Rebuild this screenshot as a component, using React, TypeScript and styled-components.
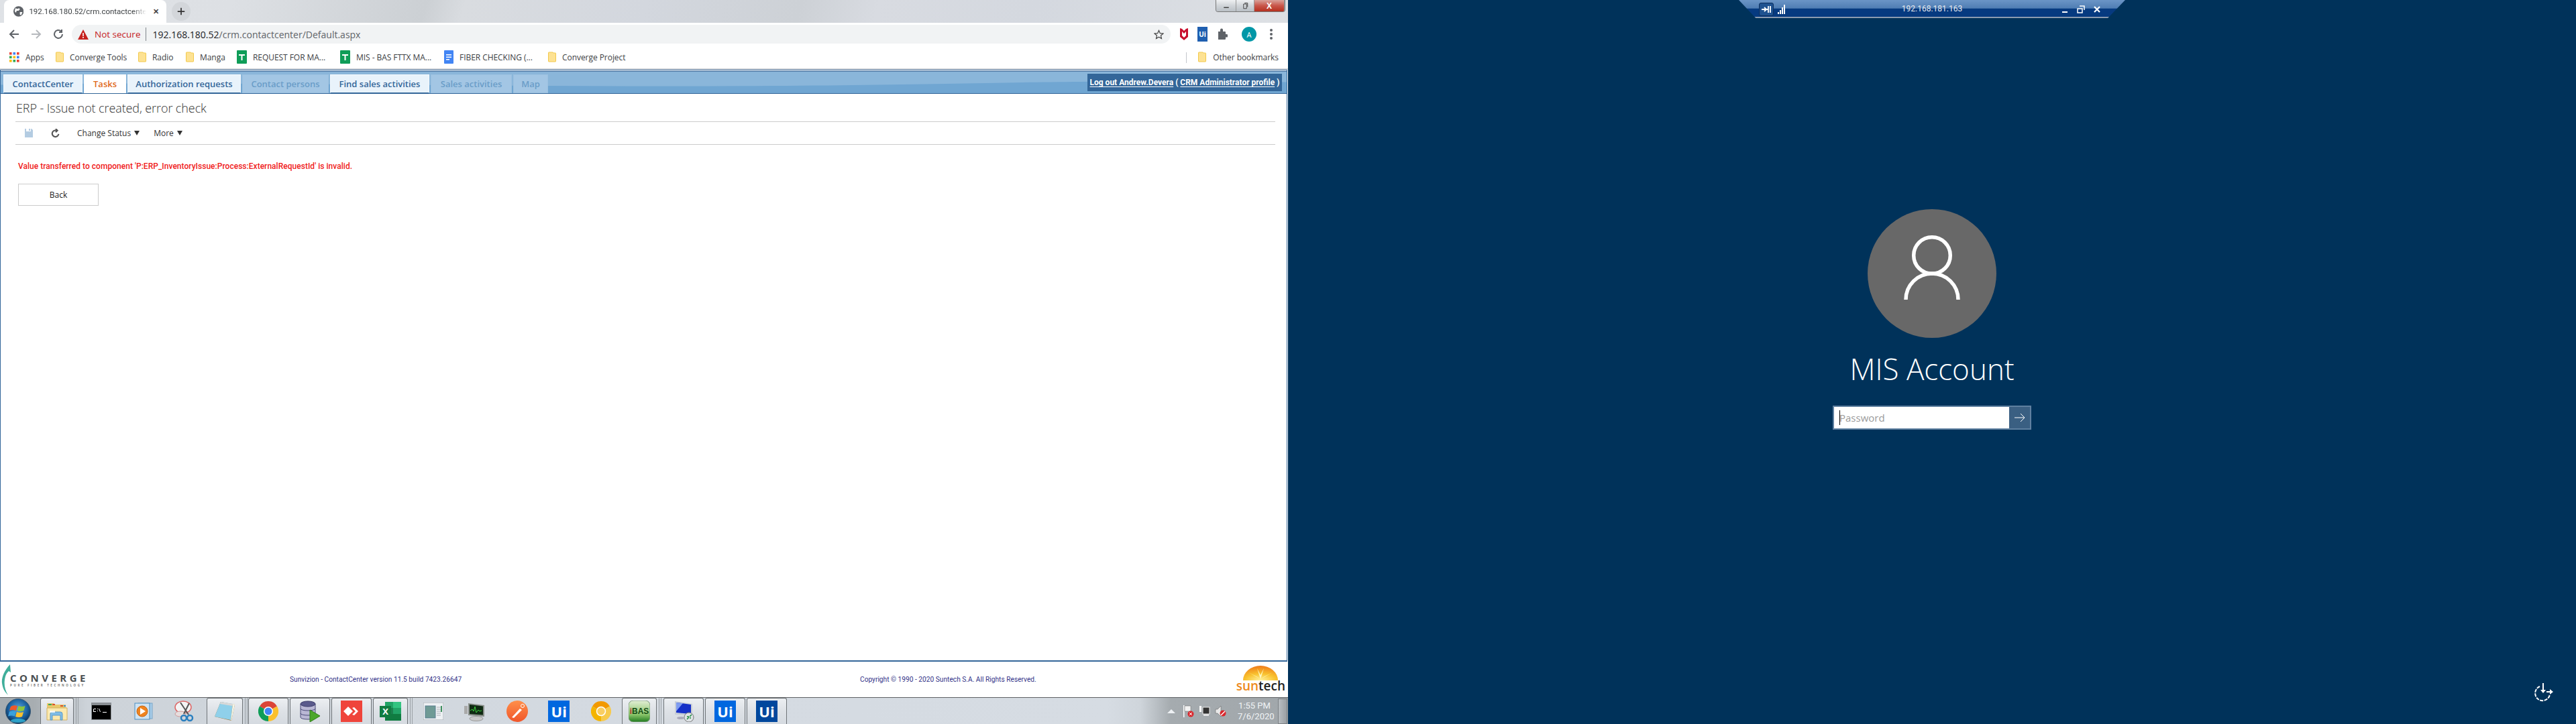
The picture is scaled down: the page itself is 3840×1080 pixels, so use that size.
import React from "react";
import styled, { createGlobalStyle } from "styled-components";

const Global = createGlobalStyle`
  html, body { margin: 0; padding: 0; background: #00325a; overflow: hidden; }
  * { box-sizing: border-box; }
`;
const ui = `"Open Sans", "Liberation Sans", sans-serif`;
const narrow = `Roboto, "Liberation Sans", sans-serif`;

const Screen = styled.div`display: grid; grid-template-columns: 1920px 1920px; width: 3840px; height: 1080px;`;
const LeftPane = styled.div`display: flex; flex-direction: column; height: 1080px; background: #fff; font-family: ${ui}; overflow: hidden;`;

const TabStrip = styled.div`
  display: flex; align-items: flex-start; height: 34px; flex: none; padding-left: 6px;
  background: linear-gradient(105deg, #dfe2e6 0%, #dde0e4 18%, #ccd0d4 33%, #d9dce0 36%, #d3d7de 50%, #cdd1d6 62%, #d8dbe1 68%, #d4d8df 80%, #dde0e4 100%);
`;
const BrowserTab = styled.div`
  display: flex; align-items: center; width: 242px; height: 34px; background: #fff;
  border-radius: 8px 8px 0 0; padding: 0 10px 0 14px; gap: 8px; color: #3c4043; font: 11.5px ${narrow};
`;
const TabTitle = styled.span`
  flex: 1; white-space: nowrap;
  -webkit-mask-image: linear-gradient(90deg, #000 88%, transparent);
  mask-image: linear-gradient(90deg, #000 88%, transparent);
`;
const TabClose = styled.span`font: 700 11px "Liberation Sans", sans-serif; color: #444; width: 12px; text-align: center;`;
const NewTab = styled.div`
  width: 28px; height: 28px; margin: 3px 0 0 8px; border-radius: 50%; background: #d3d6da; color: #333;
  display: flex; align-items: center; justify-content: center;
`;
const WinControls = styled.div`
  display: flex; margin-left: auto; margin-right: 4px; height: 18px; border: 1px solid #777; border-top: 0;
  border-radius: 0 0 4px 4px; overflow: hidden;
`;
const WinBtn = styled.div<{ $w: number; $red?: boolean }>`
  width: ${(p) => p.$w}px; display: flex; align-items: center; justify-content: center;
  border-right: 1px solid #999;
  color: ${(p) => (p.$red ? "#fff" : "#333")}; font: 700 12px "Liberation Sans", sans-serif;
  background: ${(p) => p.$red ? "linear-gradient(#d9a29a, #c8564a 50%, #b5301f)" : "linear-gradient(#eef0f2, #d0d4d8 50%, #b9bfc5)"};
`;

const Toolbar = styled.div`display: flex; align-items: center; height: 34px; flex: none; padding: 0 0 0 13px; background: #fff; color: #5f6368;`;
const NavIcon = styled.div<{ $w?: number }>`width: ${(p) => p.$w ?? 33}px; display: flex;`;
const Omnibox = styled.div`
  display: flex; align-items: center; width: 1638px; height: 28px; margin-left: -4px; padding: 0 10px 0 9px;
  background: #f1f3f4; border-radius: 14px; font-size: 14px; color: #5f6368;
`;
const NotSecure = styled.span`color: #c5221f; margin-left: 9px; font-size: 13.5px;`;
const Divider = styled.span`width: 1px; height: 20px; background: #80868b; margin: 0 9px 0 8px;`;
const Host = styled.span`color: #202124;`;
const StarWrap = styled.div`margin-left: auto; display: flex;`;
const Extensions = styled.div`display: flex; align-items: center; gap: 0; margin-left: 14px;`;
const UiBadge = styled.div<{ $size: number; $h?: number; $bg: string; $fs: number }>`
  width: ${(p) => p.$size}px; height: ${(p) => p.$h ?? p.$size}px; background: ${(p) => p.$bg}; color: #fff; flex: none;
  display: flex; align-items: center; justify-content: center; font: 700 ${(p) => p.$fs}px "Open Sans", sans-serif;
`;
const Avatar = styled.div`
  width: 22px; height: 22px; border-radius: 50%; background: #0097a7; color: #fff; font-size: 11px; margin-left: 21px;
  display: flex; align-items: center; justify-content: center;
`;
const ExtSlot = styled.div<{ $ml: number }>`margin-left: ${(p) => p.$ml}px; display: flex;`;

const Bookmarks = styled.div`
  display: flex; align-items: center; height: 36px; flex: none; padding-left: 14px; background: #fff;
  font-size: 12px; color: #3c4043; border-bottom: 2px solid #cdd1d7; letter-spacing: -0.05px;
`;
const Bookmark = styled.div<{ $w: number }>`
  display: flex; align-items: center; gap: 9px; width: ${(p) => p.$w}px; white-space: nowrap; flex: none;
`;
const OtherBookmarks = styled.div`
  display: flex; align-items: center; gap: 10px; margin-left: auto; padding-left: 18px; padding-right: 14px;
  position: relative; white-space: nowrap;
  &::before { content: ""; position: absolute; left: 0; top: 1px; height: 16px; width: 1px; background: #c4c7cc; }
`;

const Frame = styled.div`
  flex: 1; display: flex; flex-direction: column; margin-right: 1px; min-height: 0;
  border: 1px solid #336699; border-bottom-width: 2px; padding-top: 1px;
`;
const MenuBar = styled.div`
  position: relative; display: flex; align-items: flex-end; height: 34px; flex: none; padding-left: 4px; gap: 2px;
  background: #8ab6da; border-top: 1px solid #336699; border-bottom: 1px solid #336699; overflow: hidden;
`;
const Wave = styled.svg`position: absolute; left: 0; top: 0; width: 100%; height: 100%;`;
const MenuTab = styled.div<{ $w: number; $state: "on" | "active" | "off" }>`
  position: relative; width: ${(p) => p.$w}px; height: 28px; display: flex; align-items: center; justify-content: center;
  font-size: 13px; font-weight: 600; white-space: nowrap;
  color: ${(p) => p.$state === "active" ? "#e06a1b" : p.$state === "on" ? "#336699" : "#6a9dc8"};
  background: ${(p) => p.$state === "active" ? "#fff" : p.$state === "on" ? "#e9f3fb" : "#a3c6e4"};
  border: 1px solid ${(p) => p.$state === "active" ? "#fff" : p.$state === "on" ? "#f4f9fd" : "#9cc1e0"};
  ${(p) => p.$state === "on" ? "border-bottom: 1px solid #336699;" : ""}
`;
const Logout = styled.div`
  position: relative; margin-left: auto; margin-right: 7px; align-self: center; height: 26px; width: 290px;
  display: flex; align-items: center; justify-content: center; background: #336699; color: #fff;
  font: 700 12px ${narrow}; white-space: nowrap;
  u { text-underline-offset: 2px; }
`;
const Content = styled.div`flex: 1; padding: 0 17px 0 22px;`;
const Title = styled.h1`
  margin: 0; height: 42px; padding: 9px 0 0 1px; font-size: 18px; font-weight: 300; color: #333; line-height: 24px; letter-spacing: -0.1px;
  border-bottom: 1px solid #ccc; white-space: nowrap;
`;
const Actions = styled.div`display: flex; align-items: center; height: 34px; border-bottom: 1px solid #ccc; font-size: 12px; color: #333;`;
const ActionIcon = styled.div<{ $ml: number }>`margin-left: ${(p) => p.$ml}px; display: flex;`;
const ActionLabel = styled.span<{ $ml: number }>`margin-left: ${(p) => p.$ml}px; white-space: nowrap; display: flex; align-items: center;`;
const Caret = styled.span`
  margin-left: 5px; width: 0; height: 0; border-left: 4px solid transparent; border-right: 4px solid transparent; border-top: 7px solid #333;
`;
const ErrorText = styled.div`margin: 23px 0 0 4px; height: 18px; font: 500 12px/18px ${narrow}; letter-spacing: 0.03px; color: #f01c1c; white-space: nowrap;`;
const BackButton = styled.div`
  width: 120px; height: 33px; margin: 17px 0 0 4px; border: 1px solid #ccc; background: #fff; color: #222; font-size: 12px;
  display: flex; align-items: center; justify-content: center;
`;

const Footer = styled.div`
  position: relative; display: grid; grid-template-columns: 432px 850px 1fr auto; align-items: center; height: 53px; flex: none;
  background: #fff; font: 10.2px ${narrow}; color: #333388;
`;
const ConvergeLogo = styled.div`display: flex; align-items: center; height: 53px; padding-left: 2px;`;
const ConvergeText = styled.div`margin-left: -1px; display: flex; flex-direction: column; padding-top: 2px;`;
const ConvergeName = styled.span`font: 700 15px/15px "Open Sans", sans-serif; letter-spacing: 4.5px; color: #4a4f52;`;
const ConvergeTag = styled.span`font: 700 4.5px/7px "Open Sans", sans-serif; letter-spacing: 2.6px; color: #777; white-space: nowrap;`;
const SuntechLogo = styled.div`display: flex; flex-direction: column; align-items: center; padding-right: 4px; margin-top: -2px;`;
const SuntechWord = styled.div`font: 600 19px/18px "Open Sans", sans-serif; color: #222; margin-top: -1px;`;
const Sun = styled.span`color: #ee8a1c;`;

const Taskbar = styled.div`
  display: flex; align-items: stretch; height: 40px; flex: none; border-top: 1px solid #5d6063; position: relative;
  background: linear-gradient(90deg, #a7adb1 0, #a7adb1 50px, #cdd3d9 130px, #d4dae1 900px, #d6dce3 1650px, #cfd5db 1700px, #a5abaf 1745px, #a1a7ab 100%);
`;
const OrbSlot = styled.div`width: 60px; display: flex; align-items: center; padding-left: 8px; flex: none;`;
const TaskBtn = styled.div<{ $w: number }>`
  width: ${(p) => p.$w}px; flex: none; display: flex; align-items: center; justify-content: center; margin-right: 2px;
  border: 1px solid #6f7478; border-bottom: 0; border-radius: 3px 3px 0 0;
  background: linear-gradient(#eceff2, #dde1e6 50%, #d5dae0);
`;
const TaskIcon = styled.div`width: 62.5px; flex: none; display: flex; align-items: center; justify-content: center;`;
const TaskSep = styled.div<{ $w: number }>`
  width: ${(p) => p.$w}px; flex: none; display: flex; gap: 2px; align-items: stretch; padding-left: 1px;
  &::before, &::after { content: ""; width: 1px; background: #9aa0a5; }
`;
const Tray = styled.div`margin-left: auto; display: flex; align-items: center;`;
const TrayIcon = styled.div<{ $ml: number }>`margin-left: ${(p) => p.$ml}px; display: flex;`;
const Clock = styled.div`margin-left: 17px; width: 50px; text-align: center; color: #f0f3f5; font: 13px/16px ${narrow}; white-space: nowrap;`;
const ShowDesktop = styled.div`
  width: 14px; align-self: stretch; margin: 1px 1px 0 10px; border: 1px solid #7c8185;
  background: linear-gradient(90deg, #b9bec2, #9a9fa3);
`;

const RightPane = styled.div`
  display: flex; flex-direction: column; align-items: center; height: 1080px; background: #00325a; font-family: ${ui}; color: #fff;
`;
const RdpBar = styled.div`
  position: relative; width: 576px; height: 27px; flex: none; display: flex; align-items: center; padding: 0 36px 0 30px;
  background: linear-gradient(#6b95c6 0, #4f7db3 46%, #063a80 47%, #063a80 92%, #8b9bb0 93%, #8b9bb0 100%);
  clip-path: polygon(0 0, 100% 0, 95.5% 100%, 4.4% 100%);
  color: #e6e9ee; font: 12px ${narrow};
`;
const PinBox = styled.div`
  width: 22px; height: 20px; border: 1px solid #0c2f5e; border-radius: 3px; background: #1f5290; display: flex; align-items: center; justify-content: center;
`;
const Signal = styled.div`margin-left: 6px; display: flex;`;
const RdpTitle = styled.div`position: absolute; left: 0; right: 0; top: 5px; text-align: center; line-height: 16px;`;
const RdpControls = styled.div`margin-left: auto; display: flex; align-items: center; gap: 12px;`;
const Portrait = styled.div`margin-top: 285px; width: 192px; height: 192px; flex: none;`;
const UserName = styled.div`margin-top: 16px; font-size: 44px; font-weight: 300; line-height: 60px; white-space: nowrap;`;
const Signin = styled.div`
  margin-top: 25px; display: flex; width: 296px; height: 36px; border: 2px solid #5f80a0; flex: none;
`;
const PasswordField = styled.div`
  flex: 1; background: #fff; color: #9a9a9a; font-size: 15px; display: flex; align-items: center; padding-left: 8px; position: relative;
  &::before { content: ""; position: absolute; left: 8px; top: 5px; width: 1px; height: 22px; background: #000; }
`;
const SubmitBtn = styled.div`width: 31px; background: #3a5f82; display: flex; align-items: center; justify-content: center;`;
const EaseSlot = styled.div`align-self: flex-end; margin: auto 33px 33px 0; display: flex;`;

const Globe = () => (
  <svg width="16" height="16" viewBox="0 0 16 16"><circle cx="8" cy="8" r="8" fill="#5f6368" /><path d="M3 3l3 1 3-1 1 2-2 2-3 0-1 3-2-2zM10 9l4 0-2 5-2-1z" fill="#fff" /></svg>
);
const Folder = () => (
  <svg width="12" height="16" viewBox="0 0 12 16"><path d="M1 1h6l1 1h3a.5.5 0 01.5.5v12a.5.5 0 01-.5.5H1a.5.5 0 01-.5-.5v-13A.5.5 0 011 1z" fill="#fde293" stroke="#f2c94c" strokeWidth="1" /></svg>
);
const Sheet = () => (
  <svg width="15" height="20" viewBox="0 0 15 20"><path d="M1 0h13a1 1 0 011 1v18a1 1 0 01-1 1H1a1 1 0 01-1-1V1a1 1 0 011-1z" fill="#0f9d58" /><path d="M3 6h9v2H8.500v7h-2V8H3z" fill="#fff" /></svg>
);
const Doc = () => (
  <svg width="14" height="20" viewBox="0 0 14 20"><path d="M1 0h12a1 1 0 011 1v18a1 1 0 01-1 1H1a1 1 0 01-1-1V1a1 1 0 011-1z" fill="#4285f4" /><path d="M3 6h8v1.500H3zM3 9.500h8V11H3zM3 13h5v1.500H3z" fill="#fff" /></svg>
);
const AppsGrid = () => (
  <svg width="15" height="15" viewBox="0 0 15 15">
    {[0, 1, 2].flatMap((r) => [0, 1, 2].map((c) => (
      <rect key={`${r}${c}`} x={c * 5.5} y={r * 5.5} width="3.600" height="3.600"
        fill={[["#ea4335", "#4285f4", "#ea4335"], ["#34a853", "#fbbc05", "#4285f4"], ["#fbbc05", "#34a853", "#ea4335"]][r][c]} />
    )))}
  </svg>
);
const Stroke = ({ d, w = 16, sw = 2, c = "currentColor" }: { d: string; w?: number; sw?: number; c?: string }) => (
  <svg width={w} height={w} viewBox="0 0 16 16" fill="none" stroke={c} strokeWidth={sw}><path d={d} /></svg>
);

const ChromeLogo = ({ s = 30 }: { s?: number }) => (
  <svg width={s} height={s} viewBox="0 0 30 30">
    <path d="M15 15L2 7.500A15 15 0 0128 7.500Z" fill="#db4437" />
    <path d="M15 15L28 7.500A15 15 0 0115 30Z" fill="#fbc02d" />
    <path d="M15 15L15 30A15 15 0 012 7.500Z" fill="#0f9d58" />
    <circle cx="15" cy="15" r="7" fill="#fff" /><circle cx="15" cy="15" r="5.500" fill="#4285f4" />
  </svg>
);
const Orb = () => (
  <svg width="38" height="38" viewBox="0 0 38 38">
    <defs><radialGradient id="orb" cx="50%" cy="40%" r="60%"><stop offset="0" stopColor="#5aa6df" /><stop offset=".65" stopColor="#1a5f9e" /><stop offset="1" stopColor="#0c2f52" /></radialGradient></defs>
    <circle cx="19" cy="19" r="18.500" fill="url(#orb)" stroke="#3a5a75" />
    <path d="M8 12q4-3 10 -1l-2 7q-5-2-10 0z" fill="#f0592a" /><path d="M19.500 11q5 2 10 0l-2 7q-5 2-10 0z" fill="#8cc63f" />
    <path d="M6 19.500q5-2 10 0l-2 7q-5-2-10 0z" fill="#3aa0dc" /><path d="M17 20q5 2 10 0l-2 7q-5 2-10 0z" fill="#fbc02d" />
    <ellipse cx="19" cy="33" rx="11" ry="3" fill="#39c6e8" opacity=".7" />
  </svg>
);
const ExplorerIcon = () => (
  <svg width="32" height="30" viewBox="0 0 32 30">
    <path d="M1 3h10l2 2h16v22H1z" fill="#e9c96c" /><path d="M3 4h5v2H3z" fill="#3aa655" /><path d="M9 4h4v2H9zM21 6h4v2h-4z" fill="#d9502e" /><path d="M26 6h3v2h-3z" fill="#3a8fd0" />
    <path d="M1 10h30v18H1z" fill="#fbe9ae" stroke="#d2b160" />
    <path d="M6 28V19q0-3 3-3h12q3 0 3 3v9h-3v-7H9v7z" fill="#7fbde6" stroke="#5c9ac8" /><rect x="5" y="14" width="8" height="3" fill="#fff" opacity=".8" />
  </svg>
);
const CmdIcon = () => (
  <svg width="30" height="26" viewBox="0 0 30 26"><rect width="30" height="26" fill="#8a8f94" /><rect x="1" y="4" width="28" height="21" fill="#000" />
    <path d="M4 9h3v1H4v3h3v1H3V10zM9 9h1v1H9zM9 12h1v1H9zM12 9l2 5h-1l-2-5zM17 14h6v1h-6z" fill="#fff" /></svg>
);
const MediaIcon = () => (
  <svg width="28" height="26" viewBox="0 0 28 26"><rect x="6" y="1" width="21" height="23" fill="#a9cde8" stroke="#7aa6c8" /><rect x="1" y="1" width="22" height="24" fill="#cfe3f2" stroke="#4d8fc2" />
    <circle cx="12" cy="13" r="8" fill="#ef8420" stroke="#c9650f" /><path d="M9 8l8 5-8 5z" fill="#fff" /></svg>
);
const SnipIcon = () => (
  <svg width="32" height="32" viewBox="0 0 32 32"><ellipse cx="13" cy="10" rx="12" ry="9" fill="#f4f4f4" stroke="#d66" strokeWidth="1.500" /><ellipse cx="9" cy="20" rx="8" ry="4" fill="#e7dede" stroke="#c99" />
    <path d="M9 3l12 18M22 4l-8 16" stroke="#555" strokeWidth="2" /><circle cx="23" cy="26" r="4" fill="none" stroke="#2a7fbf" strokeWidth="2.500" /><circle cx="14" cy="26" r="4" fill="none" stroke="#2a7fbf" strokeWidth="2.500" /></svg>
);
const NotepadIcon = () => (
  <svg width="32" height="30" viewBox="0 0 32 30"><path d="M10 1l21 4-5 24-25-6z" fill="#9a7b3f" /><path d="M10 1l18 3-3 24-24-5z" fill="#8fd0ea" /><path d="M10 1l18 3-.5 3-18.500-3z" fill="#d8d8d8" /><path d="M25 28l3-24 3 1-5 24z" fill="#f3f3e5" /></svg>
);
const DbIcon = () => (
  <svg width="32" height="32" viewBox="0 0 32 32">
    <path d="M2 5v20c0 4 22 4 22 0V5z" fill="#b9b7d4" stroke="#4a4a78" />
    <ellipse cx="13" cy="5" rx="11" ry="4" fill="#5a5a8c" stroke="#3a3a68" /><path d="M2 12c0 4 22 4 22 0M2 19c0 4 22 4 22 0" fill="none" stroke="#4a4a78" />
    <path d="M16 14l15 9-15 9z" fill="#4ca72c" stroke="#2f7d18" />
  </svg>
);
const AnyDesk = () => (
  <svg width="32" height="32" viewBox="0 0 32 32"><rect width="32" height="32" fill="#ef443b" /><path d="M11 9l7 7-7 7-7-7z" fill="#fff" /><path d="M20 10l6 6-6 6-3-1 5-5-5-5z" fill="#fff" /></svg>
);
const ExcelIcon = () => (
  <svg width="32" height="32" viewBox="0 0 32 32"><rect x="8" y="2" width="24" height="28" fill="#21a366" /><rect x="20" y="2" width="12" height="9" fill="#33c481" /><rect x="8" y="20" width="24" height="10" fill="#107c41" /><rect x="8" y="11" width="12" height="9" fill="#185c37" opacity=".5" />
    <rect y="8" width="17" height="17" fill="#107c41" /><text x="8.500" y="21" fontFamily="Open Sans" fontSize="13" fontWeight="700" fill="#fff" textAnchor="middle">X</text></svg>
);
const ViewerIcon = () => (
  <svg width="30" height="26" viewBox="0 0 30 26"><rect width="30" height="26" fill="#eef1f4" stroke="#a2a8ae" /><rect x="3" y="5" width="15" height="18" fill="#6f9a95" stroke="#5a7f8f" /><path d="M20 7h6M20 10h6M20 13h6M20 16h6M20 19h6" stroke="#a8aeb3" /><rect x="26" y="5" width="2" height="9" fill="#3f8f5f" /></svg>
);
const MonitorIcon = () => (
  <svg width="32" height="30" viewBox="0 0 32 30"><path d="M6 3l24 3v17L6 21z" fill="#8a8f8a" /><path d="M8 5l20 2.500v13L8 19z" fill="#0f2a12" /><path d="M9 14l3-2 2 3 2-7 2 9 3-4 2 2 3-1" fill="none" stroke="#3fd13f" /><ellipse cx="18" cy="26" rx="10" ry="3.500" fill="#c9c9c9" stroke="#999" /><rect x="0" y="7" width="5" height="12" fill="#aaa" /></svg>
);
const PostmanIcon = () => (
  <svg width="32" height="32" viewBox="0 0 32 32"><defs><linearGradient id="pm" x1="0" y1="0" x2="0" y2="1"><stop offset="0" stopColor="#ff8f4a" /><stop offset="1" stopColor="#f0562a" /></linearGradient></defs><circle cx="16" cy="16" r="16" fill="url(#pm)" />
    <path d="M8 25l12-13 3 2-12 12z" fill="#fff" /><circle cx="24" cy="8" r="2.500" fill="none" stroke="#fff" /></svg>
);
const CanaryIcon = () => (
  <svg width="30" height="30" viewBox="0 0 30 30"><path d="M15 15L2 7.500A15 15 0 0128 7.500Z" fill="#f29900" /><path d="M15 15L28 7.500A15 15 0 0115 30Z" fill="#f7ca4d" /><path d="M15 15L15 30A15 15 0 012 7.500Z" fill="#f4b400" /><circle cx="15" cy="15" r="6.500" fill="#f9ce63" stroke="#fff" strokeWidth="1.500" /></svg>
);
const IbasIcon = () => (
  <svg width="32" height="32" viewBox="0 0 32 32"><defs><linearGradient id="ib" x1="0" y1="0" x2="0" y2="1"><stop offset="0" stopColor="#e3efd6" /><stop offset=".65" stopColor="#8cc66b" /><stop offset="1" stopColor="#1e7a1e" /></linearGradient></defs><rect width="32" height="32" rx="7" fill="url(#ib)" stroke="#7d9a7d" /><text x="16" y="20" textAnchor="middle" fontFamily="Liberation Sans" fontSize="12" fontWeight="700" fill="#124d12"><tspan fill="#b33">i</tspan>BAS</text></svg>
);
const RdpIcon = () => (
  <svg width="32" height="32" viewBox="0 0 32 32"><path d="M3 1l26 4v18L3 21z" fill="#c8ced6" /><path d="M5 3l22 3v14L5 18z" fill="#1530c8" /><path d="M5 3l10 1-10 12z" fill="#7f9cf0" /><circle cx="24" cy="25" r="7" fill="#dfe3e6" stroke="#777" /><path d="M21 28l3-3M25 24l3-3M21 24h3M25 26h2" stroke="#1c8a3a" strokeWidth="1.500" /><ellipse cx="12" cy="26" rx="6" ry="2" fill="#aab" /></svg>
);
const UiTile = ({ bg }: { bg: string }) => <UiBadge $size={32} $bg={bg} $fs={22}>Ui</UiBadge>;

const tabs: { t: string; w: number; s: "on" | "active" | "off" }[] = [
  { t: "ContactCenter", w: 118, s: "on" }, { t: "Tasks", w: 63, s: "active" }, { t: "Authorization requests", w: 169, s: "on" },
  { t: "Contact persons", w: 129, s: "off" }, { t: "Find sales activities", w: 148, s: "on" }, { t: "Sales activities", w: 121, s: "off" }, { t: "Map", w: 52, s: "off" },
];

export default function App() {
  return (
    <>
      <Global />
      <Screen>
        <LeftPane>
          <TabStrip>
            <BrowserTab>
              <Globe />
              <TabTitle>192.168.180.52/crm.contactcente</TabTitle>
              <TabClose>✕</TabClose>
            </BrowserTab>
            <NewTab><Stroke w={14} d="M8 2v12M2 8h12" /></NewTab>
            <WinControls>
              <WinBtn $w={30}><Stroke w={12} c="#444" sw={2} d="M3 11h10" /></WinBtn>
              <WinBtn $w={27}><Stroke w={12} c="#444" sw={1.3} d="M5 4h6v9H5zM7 2h6v8" /></WinBtn>
              <WinBtn $w={45} $red>X</WinBtn>
            </WinControls>
          </TabStrip>
          <Toolbar>
            <NavIcon><Stroke d="M15 8H2M8 2L2 8l6 6" /></NavIcon>
            <NavIcon $w={33}><Stroke c="#b6b9bd" d="M1 8h13M8 2l6 6-6 6" /></NavIcon>
            <NavIcon $w={32}><Stroke d="M14 8a6 6 0 11-2-4.500M13 1v4H9" /></NavIcon>
            <Omnibox>
              <svg width="16" height="15" viewBox="0 0 16 15"><path d="M8 0l8 15H0z" fill="#c5221f" /><path d="M7.200 5h1.600v5H7.200zM7.200 11h1.600v2H7.200z" fill="#fff" /></svg>
              <NotSecure>Not secure</NotSecure>
              <Divider />
              <span><Host>192.168.180.52</Host>/crm.contactcenter/Default.aspx</span>
              <StarWrap><Stroke w={15} c="#444" sw={1.3} d="M8 1.500l2 4.500 4.800.5-3.600 3.200 1 4.800L8 12l-4.200 2.500 1-4.800L1.200 6.500 6 6z" /></StarWrap>
            </Omnibox>
            <Extensions>
              <svg width="12" height="20" viewBox="0 0 12 20"><path d="M0 1l3 1 3 3 3-3 3-1v13l-6 5-6-5z" fill="#c8102e" /><path d="M3 6l3 3 3-3v6l-3 3-3-3z" fill="#fff" /></svg>
              <ExtSlot $ml={14}><UiBadge $size={15} $h={22} $bg="#1f5fb0" $fs={10}>Ui</UiBadge></ExtSlot>
              <ExtSlot $ml={15}><svg width="15" height="20" viewBox="0 0 15 20"><path d="M1 6h3V3.500a2 2 0 014 0V6h3a1 1 0 011 1v3h1.500a2.300 2.300 0 010 4.600H12V17a1 1 0 01-1 1H1z" fill="#5f6368" /></svg></ExtSlot>
              <Avatar>A</Avatar>
              <ExtSlot $ml={20}><svg width="4" height="20" viewBox="0 0 4 20"><circle cx="2" cy="4" r="2" fill="#5f6368" /><circle cx="2" cy="10" r="2" fill="#5f6368" /><circle cx="2" cy="16" r="2" fill="#5f6368" /></svg></ExtSlot>
            </Extensions>
          </Toolbar>
          <Bookmarks>
            <Bookmark $w={69}><AppsGrid />Apps</Bookmark>
            <Bookmark $w={123}><Folder />Converge Tools</Bookmark>
            <Bookmark $w={71}><Folder />Radio</Bookmark>
            <Bookmark $w={76}><Folder />Manga</Bookmark>
            <Bookmark $w={154}><Sheet />REQUEST FOR MA...</Bookmark>
            <Bookmark $w={155}><Sheet />MIS - BAS FTTX MA...</Bookmark>
            <Bookmark $w={155}><Doc />FIBER CHECKING (...</Bookmark>
            <Bookmark $w={120}><Folder />Converge Project</Bookmark>
            <OtherBookmarks><Folder />Other bookmarks</OtherBookmarks>
          </Bookmarks>
          <Frame>
            <MenuBar>
              <Wave viewBox="0 0 1916 33" preserveAspectRatio="none"><path d="M0 20C300 14 700 24 1100 22S1500 12 1916 16V33H0Z" fill="#70a6d2" /></Wave>
              {tabs.map((t) => <MenuTab key={t.t} $w={t.w} $state={t.s}>{t.t}</MenuTab>)}
              <Logout><span><u>Log out Andrew.Devera</u> ( <u>CRM Administrator profile</u> )</span></Logout>
            </MenuBar>
            <Content>
              <Title>ERP - Issue not created, error check</Title>
              <Actions>
                <ActionIcon $ml={14}><svg width="12" height="13" viewBox="0 0 12 13"><path d="M0 0h2v4h7V0h1l2 2v11H0z" fill="#b4cce2" /><path d="M6 0h2v3H6z" fill="#b4cce2" /></svg></ActionIcon>
                <ActionIcon $ml={27}><Stroke w={14} c="#555" sw={2.4} d="M13 9a5.500 5.500 0 11-4-6M8 0l3 3-3 3" /></ActionIcon>
                <ActionLabel $ml={25}>Change Status<Caret /></ActionLabel>
                <ActionLabel $ml={21}>More<Caret /></ActionLabel>
              </Actions>
              <ErrorText>Value transferred to component 'P:ERP_InventoryIssue:Process:ExternalRequestId' is invalid.</ErrorText>
              <BackButton>Back</BackButton>
            </Content>
          </Frame>
          <Footer>
            <ConvergeLogo>
              <svg width="14" height="46" viewBox="0 0 14 46"><path d="M13 0C4 10 0 20 1 28c1 8 4 13 9 18C5 38 4 30 5 23c1-7 3-10 6-13l3 2z" fill="#3fae9a" /></svg>
              <ConvergeText>
                <ConvergeName>CONVERGE</ConvergeName>
                <ConvergeTag>PURE FIBER TECHNOLOGY</ConvergeTag>
              </ConvergeText>
            </ConvergeLogo>
            <span>Sunvizion - ContactCenter version 11.5 build 7423.26647</span>
            <span>Copyright © 1990 - 2020 Suntech S.A. All Rights Reserved.</span>
            <SuntechLogo>
              <svg width="52" height="22" viewBox="0 0 52 22">
                <defs><radialGradient id="sun" cx="50%" cy="100%" r="100%"><stop offset="0" stopColor="#fff3a0" /><stop offset=".45" stopColor="#f9c22e" /><stop offset="1" stopColor="#ee7a1a" /></radialGradient></defs>
                <path d="M0 22A26 22 0 0152 22Z" fill="url(#sun)" />
                <path d="M26 20L21 4l5 10 5-10zM26 20L8 10l12 6zM26 20L44 10l-12 6z" fill="#fff8c0" />
              </svg>
              <SuntechWord><Sun>sun</Sun>tech</SuntechWord>
            </SuntechLogo>
          </Footer>
          <Taskbar>
            <OrbSlot><Orb /></OrbSlot>
            <TaskBtn $w={50}><ExplorerIcon /></TaskBtn>
            <TaskSep $w={8} />
            <TaskIcon><CmdIcon /></TaskIcon>
            <TaskIcon><MediaIcon /></TaskIcon>
            <TaskIcon><SnipIcon /></TaskIcon>
            <TaskBtn $w={54}><NotepadIcon /></TaskBtn>
            <TaskSep $w={6} />
            <TaskBtn $w={60}><ChromeLogo /></TaskBtn>
            <TaskBtn $w={60}><DbIcon /></TaskBtn>
            <TaskBtn $w={60}><AnyDesk /></TaskBtn>
            <TaskBtn $w={52}><ExcelIcon /></TaskBtn>
            <TaskSep $w={5} />
            <TaskIcon><ViewerIcon /></TaskIcon>
            <TaskIcon><MonitorIcon /></TaskIcon>
            <TaskIcon><PostmanIcon /></TaskIcon>
            <TaskIcon><UiTile bg="#0067df" /></TaskIcon>
            <TaskIcon><CanaryIcon /></TaskIcon>
            <TaskBtn $w={52}><IbasIcon /></TaskBtn>
            <TaskSep $w={8} />
            <TaskBtn $w={60}><RdpIcon /></TaskBtn>
            <TaskBtn $w={60}><UiTile bg="#0067df" /></TaskBtn>
            <TaskBtn $w={60}><UiTile bg="#00479d" /></TaskBtn>
            <Tray>
              <svg width="12" height="6" viewBox="0 0 12 6"><path d="M6 0l6 6H0z" fill="#eef1f4" /></svg>
              <TrayIcon $ml={11}><svg width="18" height="18" viewBox="0 0 18 18"><path d="M1 0h1.500v18H1z" fill="#fff" /><path d="M3 1h9v8H3z" fill="#f2f2f2" stroke="#666" strokeWidth=".5" /><circle cx="12" cy="13" r="4.500" fill="#d9262c" /><path d="M10 11l4 4M14 11l-4 4" stroke="#fff" /></svg></TrayIcon>
              <TrayIcon $ml={5}><svg width="18" height="18" viewBox="0 0 18 18"><rect x="7" y="3" width="10" height="10" fill="#333" stroke="#eee" /><path d="M2 1h3v9H2zM8 14h8v1.500H8z" fill="#fff" /></svg></TrayIcon>
              <TrayIcon $ml={7}><svg width="17" height="18" viewBox="0 0 17 18"><path d="M1 6h3l5-5v16l-5-5H1z" fill="#e8e8e8" stroke="#555" strokeWidth=".5" /><circle cx="12" cy="12" r="4.500" fill="#d9262c" /><path d="M9 15l6-6" stroke="#fff" strokeWidth="1.500" /></svg></TrayIcon>
              <Clock>1:55 PM<br />7/6/2020</Clock>
              <ShowDesktop />
            </Tray>
          </Taskbar>
        </LeftPane>
        <RightPane>
          <RdpBar>
            <PinBox><svg width="16" height="14" viewBox="0 0 16 14"><path d="M1 7h10M5 4l3 3-3 3M14 2v10M11 2v10" stroke="#fff" strokeWidth="1.800" fill="none" /></svg></PinBox>
            <Signal><svg width="12" height="15" viewBox="0 0 12 15" fill="#fff"><path d="M0 12h2v3H0zM3 9h2v6H3zM6 5h2v10H6zM9 1h2v14H9z" /></svg></Signal>
            <RdpTitle>192.168.181.163</RdpTitle>
            <RdpControls>
              <svg width="12" height="12" viewBox="0 0 12 12"><path d="M2 9h8v2H2z" fill="#fff" /></svg>
              <svg width="12" height="12" viewBox="0 0 12 12" fill="none" stroke="#fff" strokeWidth="1.500"><path d="M1 5h7v6H1zM4 1h7v6" /></svg>
              <svg width="12" height="12" viewBox="0 0 12 12" fill="none" stroke="#fff" strokeWidth="2.200"><path d="M2 2l8 8M10 2l-8 8" /></svg>
            </RdpControls>
          </RdpBar>
          <Portrait>
            <svg width="192" height="192" viewBox="0 0 192 192">
              <circle cx="96" cy="96" r="96" fill="#686868" />
              <circle cx="96" cy="69" r="27.300" fill="none" stroke="#fff" strokeWidth="5.500" />
              <path d="M57 135a39 39 0 0178 0" fill="none" stroke="#fff" strokeWidth="5.500" />
            </svg>
          </Portrait>
          <UserName>MIS Account</UserName>
          <Signin>
            <PasswordField>Password</PasswordField>
            <SubmitBtn><svg width="16" height="14" viewBox="0 0 16 14" fill="none" stroke="#fff" strokeWidth="1"><path d="M0 7h15M9 1l6 6-6 6" /></svg></SubmitBtn>
          </Signin>
          <EaseSlot>
            <svg width="30" height="28" viewBox="0 0 30 28" fill="none" stroke="#fff" strokeWidth="2">
              <path d="M9 5a11 11 0 1 0 15 12" strokeDasharray="5 1.500" />
              <path d="M14 0v13" /><path d="M10 10l4 5 4-5z" fill="#fff" strokeWidth="0" /><path d="M19 13h8" /><path d="M24 9l5 4-5 4z" fill="#fff" strokeWidth="0" />
            </svg>
          </EaseSlot>
        </RightPane>
      </Screen>
    </>
  );
}
